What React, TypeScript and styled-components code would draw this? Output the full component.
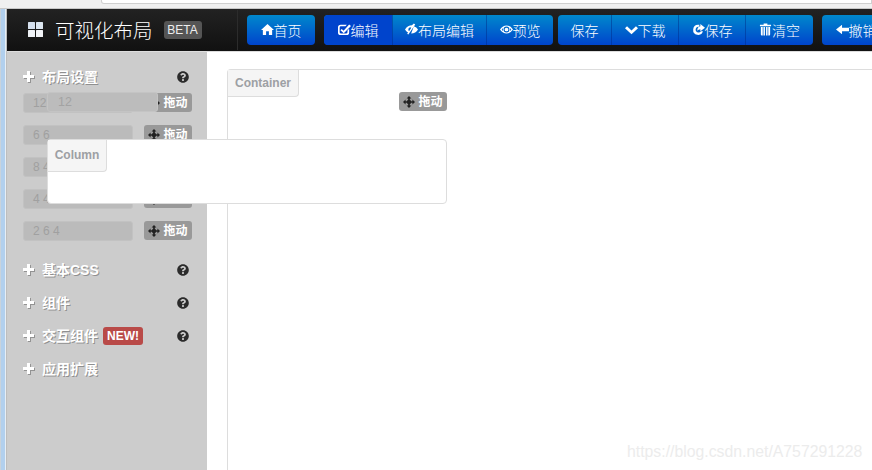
import React from "react";
import styled, { createGlobalStyle } from "styled-components";
import { FaQuestionCircle } from "react-icons/fa";

const Global = createGlobalStyle`
  html, body { margin: 0; padding: 0; width: 872px; height: 470px; overflow: hidden; background: #fff; }
  body { font-family: "Liberation Sans", "Noto Sans CJK SC", sans-serif; }
  * { box-sizing: border-box; }
`;

const Frame = styled.div`
  position: relative; width: 872px; height: 470px; overflow: hidden;
  display: flex; flex-direction: column;
`;
const Chrome = styled.div`
  height: 9px; flex: none; background: #f0f0f0; padding-left: 101px; display: flex;
  border-bottom: 1px solid #c8c8c8;
`;
const UrlBar = styled.div`
  flex: 1; height: 4px; background: #fff; border: 1px solid #d0d0d0; border-top: 0; border-radius: 0 0 0 3px;
`;
const Window = styled.div`
  flex: 1; display: flex; min-height: 0;
`;
const WinEdge = styled.div`
  width: 7px; flex: none;
  background: linear-gradient(90deg, #c9d3dc 0 1px, #b2d0ee 1px 5px, #e6eef6 5px 6px, #bdbdbd 6px);
`;
const Content = styled.div`
  flex: 1; min-width: 0; display: flex; flex-direction: column;
`;
const Navbar = styled.header`
  height: 43px; flex: none; display: flex; align-items: center;
  background: linear-gradient(#222, #111); border-bottom: 1px solid #ddd;
  padding-bottom: 1px; white-space: nowrap;
`;
const Brand = styled.div`
  width: 231px; height: 40px; flex: none; display: flex; align-items: center; padding-left: 21px;
  color: #fff; font-size: 19.5px; font-weight: 300; border-right: 1px solid #2c2c2c;
`;
const BrandMark = styled.svg`
  width: 15px; height: 15px; margin-right: 12px; flex: none;
`;
const Beta = styled.span`
  margin-left: 11px; width: 38px; height: 18px; display: flex; align-items: center; justify-content: center;
  background: #555; border-radius: 3px; font-size: 12px; font-weight: 400; color: #eee;
`;
const Toolbar = styled.nav`
  display: flex; gap: 9px; margin-left: 9px; flex: none;
`;
const Group = styled.div`
  display: flex; height: 30px; border-radius: 4px; overflow: hidden;
  background: linear-gradient(#0088cc, #0044cc);
  &:nth-child(3) { margin-left: -4px; }
`;
const Btn = styled.div<{ $w: number; $active?: boolean }>`
  width: ${(p) => p.$w}px; height: 30px; display: flex; align-items: center; justify-content: center;
  color: #fff; font-size: 14px; font-weight: 300;
  background: ${(p) => (p.$active ? "#0044cc" : "transparent")};
  & + & { border-left: 1px solid rgba(0, 40, 130, 0.45); }
`;
const Glyph = styled.svg`
  width: 13px; height: 13px; flex: none; margin-right: 0; fill: #fff; stroke: none;
`;
const Body = styled.div`
  flex: 1; display: flex; min-height: 0;
`;
const Sidebar = styled.aside`
  width: 200px; flex: none; background: #ccc; padding: 16px 15px 0 16px;
`;
const Heading = styled.div<{ $mt?: number }>`
  position: relative; display: flex; align-items: center; height: 18px; margin-top: ${(p) => p.$mt ?? 15}px;
  color: #fff; font-size: 14px; font-weight: bold; text-shadow: 1px 1px 0 rgba(90, 90, 90, 0.55);
`;
const PlusMark = styled.svg`
  width: 11px; height: 11px; margin-right: 8px; flex: none; fill: #fff;
  filter: drop-shadow(1px 1px 0 rgba(90, 90, 90, 0.5));
`;
const Help = styled(FaQuestionCircle)`
  position: absolute; left: 154px; top: 4px; width: 12px; height: 12px; color: #2b2b2b;
`;
const New = styled.span`
  margin: 1px 0 0 5px; width: 40px; height: 18px; display: flex; align-items: center; justify-content: center;
  background: #b94a48; border-radius: 3px; font-size: 12px; text-shadow: none;
`;
const LayoutList = styled.div`
  display: flex; flex-direction: column; gap: 12px; margin-top: 8px; margin-bottom: 20px;
`;
const LayoutRow = styled.div`
  display: flex; align-items: flex-start; justify-content: space-between; height: 20px;
`;
const GridInput = styled.div`
  width: 110px; height: 20px; padding-left: 9px; line-height: 19px; font-size: 12px; color: #a0a0a0;
  background: #bbb; border: 1px solid #c2c2c2; border-radius: 3px;
`;
const Drag = styled.div`
  width: 48px; height: 19px; display: flex; align-items: center; justify-content: center; gap: 3px;
  padding-top: 1px;
  background: #999; border-radius: 3px; color: #fff; font-size: 12px; font-weight: bold; line-height: 17px;
`;
const MoveMark = styled.svg`
  width: 12px; height: 12px; flex: none; fill: #222;
`;
const Main = styled.main`
  flex: 1; min-width: 0; padding: 17px 0 0 20px;
`;
const Container = styled.section`
  height: 420px; background: #fff; border: 1px solid #ddd; border-right: 0; border-radius: 4px 0 0 0;
`;
const Tag = styled.div<{ $w: number; $h: number }>`
  width: ${(p) => p.$w}px; height: ${(p) => p.$h}px; display: flex; align-items: center; justify-content: center;
  padding-bottom: 1px;
  background: #f5f5f5; border: 1px solid #ddd; border-width: 0 1px 1px 0; border-radius: 0 0 4px 0;
  color: #9da0a4; font-size: 12px; font-weight: bold;
`;
const FloatingDrag = styled(Drag)`
  position: absolute; left: 399px; top: 92px;
`;
const Dragged = styled.div`
  position: absolute; left: 47px; top: 92px; width: 111px; height: 20px; padding-left: 10px;
  background: #bcbcbc; border: 1px solid #c4c4c4; border-radius: 3px; line-height: 18px; font-size: 12.5px; color: #a3a3a3;
`;
const ColumnBox = styled.div`
  position: absolute; left: 47px; top: 139px; width: 400px; height: 65px; background: #fff;
  border: 1px solid #ddd; border-radius: 4px;
`;
const Watermark = styled.div`
  position: absolute; left: 627px; top: 443px; font-size: 15.8px; color: #ececec; white-space: nowrap;
`;

const icons: Record<string, React.ReactNode> = {
  home: <path d="M7 1 L14 7.5 L12 7.5 L12 13 L8.5 13 L8.5 9 L5.5 9 L5.5 13 L2 13 L2 7.5 L0 7.5 Z" />,
  edit: (
    <path fillRule="evenodd" d="M3 2 H9.5 L8 3.6 H3 Q1.8 3.6 1.8 4.8 V10 Q1.8 11.2 3 11.2 H9 Q10.2 11.2 10.2 10 V8 L12 6.2 V10.2 Q12 13 9.2 13 H2.8 Q0 13 0 10.2 V4.8 Q0 2 3 2 Z M4 6.5 L6 8.4 L12 1.5 L14 3.2 L6.2 11 L2.6 7.8 Z" />
  ),
  eyeOff: (
    <path fillRule="evenodd" d="M0 7 Q3 2.5 7.5 2.5 L9.5 0.5 L11 1.5 L3.6 12.5 L2.2 11.6 L3.4 10.4 Q1.2 9.2 0 7 Z M9.6 3.6 Q12.6 4.6 14 7 Q11.6 11.2 6.6 11.4 Z M5.5 4.6 Q3.6 5.2 3.6 7 Q3.6 8 4.4 8.8 L6.8 5 Z" />
  ),
  eye: (
    <path fillRule="evenodd" d="M0 7 Q3 2.6 7 2.6 Q11 2.6 14 7 Q11 11.4 7 11.4 Q3 11.4 0 7 Z M7 3.8 A3.2 3.2 0 1 0 7 10.2 A3.2 3.2 0 1 0 7 3.8 Z M1.8 7 Q2.6 8.2 3.4 8.7 Q2.8 7 3.4 5.3 Q2.6 5.8 1.8 7 Z M10.6 5.3 Q11.2 7 10.6 8.7 Q11.4 8.2 12.2 7 Q11.4 5.8 10.6 5.3 Z M7 5 A2 2 0 1 1 7 9 A2 2 0 1 1 7 5 Z" />
  ),
  chevron: <path d="M2.2 3.4 L7 8 L11.8 3.4 L14 5.6 L7 12 L0 5.6 Z" />,
  share: (
    <path fillRule="evenodd" d="M6.5 2 H8 L7.6 4 H6.5 A3.2 3.2 0 1 0 9.7 9 H11.8 A5.4 5.4 0 1 1 6.5 2 Z M9 1 L14 5 L9 9 V6.6 Q6.8 6.6 5.6 8.4 Q5.8 4 9 3.6 Z" />
  ),
  trash: (
    <path d="M5 0.5 H9 V1.8 H13 V3.4 H1 V1.8 H5 Z M2 4.4 H4 V13.5 H3 Q2 13.5 2 12.5 Z M4.8 4.4 H6.4 V13.5 H4.8 Z M7.6 4.4 H9.2 V13.5 H7.6 Z M10 4.4 H12 V12.5 Q12 13.5 11 13.5 H10 Z" />
  ),
  arrow: <path d="M6.5 2 V5.2 H14 V8.8 H6.5 V12 L0 7 Z" />,
};

const Icon = ({ name }: { name: string }) => <Glyph viewBox="0 0 14 14">{icons[name]}</Glyph>;
const Plus = () => (
  <PlusMark viewBox="0 0 11 11"><path d="M4 0 H7 V4 H11 V7 H7 V11 H4 V7 H0 V4 H4 Z" /></PlusMark>
);
const Move = () => (
  <MoveMark viewBox="0 0 14 14">
    <path d="M7 0 L9.8 3 H8 V6 H11 V4.2 L14 7 L11 9.8 V8 H8 V11 H9.8 L7 14 L4.2 11 H6 V8 H3 V9.8 L0 7 L3 4.2 V6 H6 V3 H4.2 Z" />
    <circle cx="7" cy="7" r="2.6" />
  </MoveMark>
);
const Mark = () => (
  <BrandMark viewBox="0 0 15 15">
    <rect x="0" y="0" width="7" height="7" rx="0.5" fill="#d5e0ee" />
    <rect x="8" y="0" width="7" height="7" rx="0.5" fill="#dce6f0" />
    <rect x="0" y="8" width="7" height="7" rx="0.5" fill="#eef1f5" />
    <rect x="8" y="8" width="7" height="7" rx="0.5" fill="#f2f4f7" />
  </BrandMark>
);

const layouts = ["12", "6 6", "8 4", "4 4 4", "2 6 4"];

export default function App() {
  return (
    <Frame>
      <Global />
      <Chrome><UrlBar /></Chrome>
      <Window>
        <WinEdge />
        <Content>
          <Navbar>
            <Brand><Mark />可视化布局<Beta>BETA</Beta></Brand>
            <Toolbar>
              <Group><Btn $w={68}><Icon name="home" />首页</Btn></Group>
              <Group>
                <Btn $w={68} $active><Icon name="edit" />编辑</Btn>
                <Btn $w={94}><Icon name="eyeOff" />布局编辑</Btn>
                <Btn $w={67}><Icon name="eye" />预览</Btn>
              </Group>
              <Group>
                <Btn $w={53}>保存</Btn>
                <Btn $w={67}><Icon name="chevron" />下载</Btn>
                <Btn $w={67}><Icon name="share" />保存</Btn>
                <Btn $w={68}><Icon name="trash" />清空</Btn>
              </Group>
              <Group><Btn $w={68}><Icon name="arrow" />撤销</Btn></Group>
            </Toolbar>
          </Navbar>
          <Body>
            <Sidebar>
              <Heading $mt={-1}><Plus />布局设置<Help /></Heading>
              <LayoutList>
                {layouts.map((l) => (
                  <LayoutRow key={l}>
                    <GridInput>{l}</GridInput>
                    <Drag><Move />拖动</Drag>
                  </LayoutRow>
                ))}
              </LayoutList>
              <Heading $mt={-1}><Plus />基本CSS<Help /></Heading>
              <Heading><Plus />组件<Help /></Heading>
              <Heading><Plus />交互组件<New>NEW!</New><Help /></Heading>
              <Heading><Plus />应用扩展</Heading>
            </Sidebar>
            <Main>
              <Container>
                <Tag $w={71} $h={27}>Container</Tag>
              </Container>
            </Main>
          </Body>
        </Content>
      </Window>
      <FloatingDrag><Move />拖动</FloatingDrag>
      <Dragged>12</Dragged>
      <ColumnBox><Tag $w={59} $h={32}>Column</Tag></ColumnBox>
      <Watermark>https://blog.csdn.net/A757291228</Watermark>
    </Frame>
  );
}
